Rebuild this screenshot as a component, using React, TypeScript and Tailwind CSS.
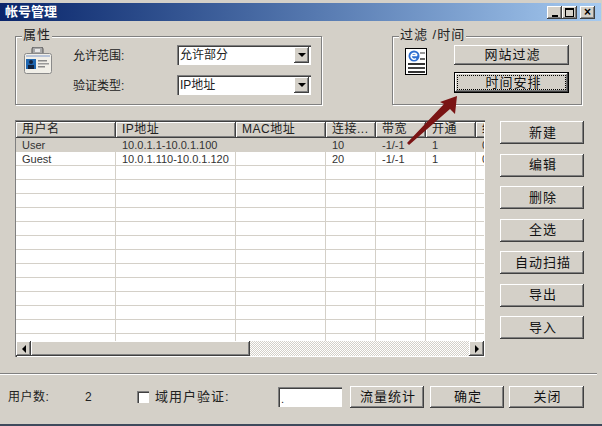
import type { ReactNode } from "react";

const FONT = "[font-family:'Liberation_Sans','Noto_Sans_CJK_SC',sans-serif]";
const RAISED =
  "bg-[#d4d0c8] shadow-[inset_-1px_-1px_0_#404040,inset_1px_1px_0_#fff,inset_-2px_-2px_0_#808080]";
const SUNKEN =
  "shadow-[inset_1px_1px_0_#808080,inset_2px_2px_0_#404040,inset_-1px_-1px_0_#fff]";

const COLUMNS = [
  { label: "用户名", w: "w-[100px]" },
  { label: "IP地址", w: "w-[120px]" },
  { label: "MAC地址", w: "w-[90px]" },
  { label: "连接...", w: "w-[50px]" },
  { label: "带宽", w: "w-[50px]" },
  { label: "开通", w: "w-[50px]" },
  { label: "终止", w: "w-[50px]" },
];

const ROWS = [
  ["User", "10.0.1.1-10.0.1.100", "", "10", "-1/-1", "1", "0"],
  ["Guest", "10.0.1.110-10.0.1.120", "", "20", "-1/-1", "1", "0"],
];

const SIDE_BUTTONS = ["新建", "编辑", "删除", "全选", "自动扫描", "导出", "导入"];

function Btn({ children, className = "" }: { children: ReactNode; className?: string }) {
  return (
    <div
      className={`${RAISED} flex items-center justify-center pl-[2px] text-[13px] tracking-[1px] text-[#111] ${className}`}
    >
      {children}
    </div>
  );
}

function Triangle({ dir }: { dir: "down" | "left" | "right" }) {
  const points = dir === "down" ? "0,0 8,0 4,4" : dir === "left" ? "4,0 4,8 0,4" : "0,0 0,8 4,4";
  const size = dir === "down" ? "w-2 h-1" : "w-1 h-2";
  return (
    <svg viewBox={dir === "down" ? "0 0 8 4" : "0 0 4 8"} className={size}>
      <polygon points={points} fill="#000" />
    </svg>
  );
}

function Combo({ value }: { value: string }) {
  return (
    <div className={`${SUNKEN} flex h-5 w-[134px] items-center bg-white pl-[3px] pr-[2px] text-[12px] text-[#222]`}>
      <span className="flex-1">{value}</span>
      <div className={`${RAISED} flex h-4 w-[15px] items-center justify-center`}>
        <Triangle dir="down" />
      </div>
    </div>
  );
}

function GroupBox({
  title,
  className = "",
  children,
}: {
  title: string;
  className?: string;
  children: ReactNode;
}) {
  return (
    <div className={`relative border border-[#808080] shadow-[1px_1px_0_#fff,inset_1px_1px_0_#fff] ${className}`}>
      <span className="absolute left-[6px] top-[-10px] bg-[#d4d0c8] px-[1px] text-[13px] leading-4 tracking-[1px] text-[#222]">
        {title}
      </span>
      {children}
    </div>
  );
}

function IdBadgeIcon() {
  return (
    <svg viewBox="0 0 28 28" className="h-7 w-7">
      <rect x="8" y="0" width="11" height="8" rx="2" fill="#a9a9a9" stroke="#555" />
      <rect x="11" y="2" width="5" height="3" fill="#e6e6e6" />
      <rect x="0.5" y="6.5" width="27" height="20" rx="2" fill="#f1efe8" stroke="#8a8a8a" />
      <rect x="2" y="8" width="24" height="2" fill="#b8c4d8" />
      <rect x="2" y="12" width="10" height="10" fill="#1f66b0" />
      <circle cx="7" cy="15" r="2" fill="#12233f" />
      <rect x="4" y="18" width="6" height="4" fill="#12233f" />
      <rect x="14" y="13" width="9" height="1.5" fill="#8a8a8a" />
      <rect x="14" y="16" width="11" height="1.5" fill="#9a9a9a" />
      <rect x="14" y="19" width="7" height="1.5" fill="#8a8a8a" />
    </svg>
  );
}

function PageIcon() {
  return (
    <svg viewBox="0 0 22 27" className="h-[27px] w-[22px]">
      <rect x="0.5" y="0.5" width="21" height="26" fill="#fff" stroke="#000" />
      <circle cx="9" cy="8" r="5.5" fill="#2f6fd0" />
      <path d="M6 7.5 h6 M12 7.5 a3 3 0 1 0 -1 3" fill="none" stroke="#fff" strokeWidth="1.5" />
      <rect x="15" y="4" width="5" height="2" fill="#9a9a9a" />
      <rect x="15" y="10" width="5" height="2" fill="#666" />
      <rect x="3" y="15" width="17" height="2" fill="#333" />
      <rect x="3" y="19" width="17" height="2" fill="#444" />
      <rect x="3" y="23" width="17" height="2" fill="#333" />
    </svg>
  );
}

function TitleButton({ children }: { children: ReactNode }) {
  return <div className={`${RAISED} flex h-[13px] w-[15px] items-center justify-center`}>{children}</div>;
}

function ListView() {
  return (
    <div className={`${SUNKEN} flex h-[237px] w-[470px] flex-col bg-white p-[2px] pb-px pl-px pr-px`}>
      <div className="flex h-[16px] shrink-0 overflow-hidden">
        {COLUMNS.map((c) => (
          <div
            key={c.label}
            className={`${RAISED} ${c.w} flex shrink-0 items-center pb-[2px] pl-[6px] text-[12px] tracking-[0.5px] text-[#222]`}
          >
            <span className="whitespace-nowrap">{c.label}</span>
          </div>
        ))}
      </div>
      <div className="min-h-0 flex-1 overflow-hidden">
        {Array.from({ length: 15 }).map((_, i) => (
          <div
            key={i}
            className={`flex h-[14px] border-b border-[#d4d0c8] ${i === 0 ? "bg-[#d4d0c8]" : "bg-white"}`}
          >
            {COLUMNS.map((c, j) => (
              <div
                key={c.label}
                className={`${c.w} shrink-0 whitespace-nowrap border-r border-[#d4d0c8] pl-[6px] text-[11px] leading-[14px] text-[#333]`}
              >
                {ROWS[i]?.[j]}
              </div>
            ))}
          </div>
        ))}
      </div>
      <div className="flex h-[15px] shrink-0 bg-[repeating-conic-gradient(#fff_0_25%,#d4d0c8_0_50%)] bg-[length:2px_2px]">
        <div className={`${RAISED} flex w-[15px] items-center justify-center`}>
          <Triangle dir="left" />
        </div>
        <div className={`${RAISED} w-[219px]`} />
        <div className="flex-1" />
        <div className={`${RAISED} flex w-[15px] items-center justify-center`}>
          <Triangle dir="right" />
        </div>
      </div>
    </div>
  );
}

export default function App() {
  return (
    <div
      className={`${FONT} relative flex h-[426px] w-[602px] flex-col overflow-hidden border-b-2 border-b-[#3d4a5c] bg-[#d4d0c8] pt-[3px]`}
    >
      {/* Title bar */}
      <div className="mr-[1px] flex h-[18px] shrink-0 items-center bg-gradient-to-r from-[#0a246a] to-[#a6caf0] pl-[5px] pr-[6px]">
        <span className="flex-1 text-[13px] font-bold text-white">帐号管理</span>
        <div className="flex">
          <TitleButton>
            <span className="mt-[7px] block h-[2px] w-[6px] bg-black" />
          </TitleButton>
          <TitleButton>
            <span className="block h-[9px] w-[9px] border border-t-2 border-black" />
          </TitleButton>
          <div className="w-[3px]" />
          <TitleButton>
            <span className="text-[12px] font-bold leading-[12px] text-black">×</span>
          </TitleButton>
        </div>
      </div>

      {/* Property and filter groups */}
      <div className="mt-[15px] flex justify-between pl-[15px] pr-[20px]">
        <GroupBox title="属性" className="h-[69px] w-[307px]">
          <div className="flex pl-2 pt-[8px]">
            <div className="pt-[2px]">
              <IdBadgeIcon />
            </div>
            <div className="ml-[21px] flex flex-col gap-[10px]">
              {[
                ["允许范围:", "允许部分"],
                ["验证类型:", "IP地址"],
              ].map(([label, value]) => (
                <div key={label} className="flex items-center">
                  <span className="w-[104px] pt-[2px] text-[12px] text-[#222]">{label}</span>
                  <Combo value={value} />
                </div>
              ))}
            </div>
          </div>
        </GroupBox>
        <GroupBox title="过滤 /时间" className="h-[69px] w-[190px]">
          <div className="flex pl-3 pt-[11px]">
            <PageIcon />
            <div className="ml-[27px] -mt-[3px] flex flex-col gap-[7px]">
              <Btn className="h-5 w-[115px]">网站过滤</Btn>
              <div className={`${RAISED} h-[21px] w-[115px] border border-black p-[2px] text-[13px] tracking-[1px] text-[#111]`}>
                <div className="flex h-full items-center justify-center border border-dotted border-black pl-[4px] leading-none">
                  时间安排
                </div>
              </div>
            </div>
          </div>
        </GroupBox>
      </div>

      {/* List and side buttons */}
      <div className="mt-[15px] flex pl-[15px]">
        <ListView />
        <div className="ml-[15px] mt-px flex flex-col gap-[9.5px]">
          {SIDE_BUTTONS.map((b) => (
            <Btn key={b} className="h-[23px] w-[84px]">
              {b}
            </Btn>
          ))}
        </div>
      </div>

      {/* Separator */}
      <div className="mr-[5px] mt-[16px] h-[2px] shrink-0 border-b border-t border-b-white border-t-[#808080]" />

      {/* Footer */}
      <div className="mt-[11px] flex h-[22px] items-center pl-[8px] text-[13px] text-[#222]">
        <span className="w-[77px] text-[12px] tracking-[0.5px]">用户数:</span>
        <span className="w-[52px] text-[12px]">2</span>
        <span className={`${SUNKEN} h-[12px] w-[12px] bg-white`} />
        <span className="ml-[6px] w-[123px] tracking-[1px]">域用户验证:</span>
        <div className={`${SUNKEN} flex h-5 w-[64px] items-end bg-white pl-[3px] text-[11px] leading-4`}>.</div>
        <Btn className="ml-2 h-[22px] w-[74px] tracking-[0.5px]">流量统计</Btn>
        <Btn className="ml-[6px] h-[22px] w-[74px]">确定</Btn>
        <Btn className="ml-[5px] h-[22px] w-[75px]">关闭</Btn>
      </div>

      {/* Annotation arrow drawn over the dialog */}
      <svg viewBox="0 0 602 426" className="pointer-events-none absolute left-0 top-0 h-[426px] w-[602px]">
        <polygon points="407,143 444,104 440,102 457,96 455,114 450,109 409,145" fill="#7a1414" />
      </svg>
    </div>
  );
}
